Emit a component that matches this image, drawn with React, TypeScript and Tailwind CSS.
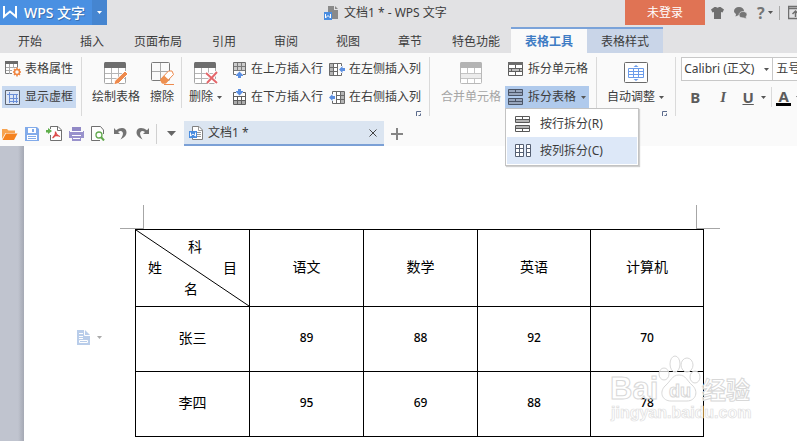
import { useState, type ReactNode } from "react";

type Student = {
  name: string;
  scores: number[];
};

const tabs = ["开始", "插入", "页面布局", "引用", "审阅", "视图", "章节", "特色功能"];

const subjects = ["语文", "数学", "英语", "计算机"];

const students: Student[] = [
  { name: "张三", scores: [89, 88, 92, 70] },
  { name: "李四", scores: [95, 69, 88, 78] },
];

/* ---------- Icons ---------- */

function Icon({ w, h, children }: { w: number; h: number; children: ReactNode }) {
  return (
    <svg
      width={w}
      height={h}
      viewBox={`0 0 ${w} ${h}`}
      fill="none"
      className="block shrink-0"
      aria-hidden="true"
    >
      {children}
    </svg>
  );
}

function Caret() {
  return (
    <Icon w={5} h={3}>
      <path d="M0 0h5L2.500 3z" fill="#555" />
    </Icon>
  );
}

function LauncherIcon() {
  return (
    <Icon w={5} h={5}>
      <path d="M.5 5V.5H5M2.500 4.500H4.500V2.500" stroke="#5b6b8c" />
    </Icon>
  );
}

function BigTable({ muted = false }: { muted?: boolean }) {
  return (
    <>
      <rect x="1.500" y=".5" width="21" height="21" rx="1" fill="#fff" stroke={muted ? "#b9b9b9" : "#a6a6a6"} />
      <path d="M1 6V1.500L2 0h20l1 1.500V6z" fill={muted ? "#b4b4b4" : "#6e6e6e"} />
    </>
  );
}

function DrawTableIcon() {
  return (
    <Icon w={26} h={22}>
      <BigTable />
      <path d="M8.500 6v15M15.500 6v15M2 11.500h20M2 16.500h20" stroke="#b5b5b5" />
      <path d="M22 9l3 3-9.500 9.500-5 1.500 1.500-4.500z" fill="#ee8a4d" stroke="#fff" />
    </Icon>
  );
}

function EraseIcon() {
  return (
    <Icon w={24} h={23}>
      <rect x="1.500" y=".5" width="18" height="18" rx="1" stroke="#7a7a7a" />
      <path d="M10.500 1v17M2 9.500h17" stroke="#aaa" />
      <path d="M10.500 17.500l8-8.500h3.500l1.500 3.500-8 8.500h-3z" fill="#fff" stroke="#ee8a4d" />
      <path d="M10 18l4-4.500 5 4.500-3 3.500h-4z" fill="#ee9050" />
      <path d="M14 22.500h10" stroke="#ee8a4d" />
    </Icon>
  );
}

function DeleteTableIcon() {
  return (
    <Icon w={26} h={22}>
      <BigTable />
      <path d="M8.500 6v15M15.500 6v15M2 11.500h20M2 16.500h20" stroke="#b5b5b5" />
      <path d="M13 11l11 10M24 10L14 21" stroke="#fff" strokeWidth="4" />
      <path d="M13 11l11 10M24 10L14 21" stroke="#e4676b" strokeWidth="2" />
    </Icon>
  );
}

function MergeIcon() {
  return (
    <Icon w={24} h={22}>
      <BigTable muted />
      <path d="M2 11h20v5H2z" fill="#ececec" />
      <path d="M8.500 6v5M15.500 6v5M8.500 16v5M15.500 16v5M2 11.500h20M2 16.500h20" stroke="#c4c4c4" />
    </Icon>
  );
}

function AutoFitIcon() {
  return (
    <Icon w={24} h={22}>
      <rect x=".5" y=".5" width="23" height="20" rx="1" fill="#fff" stroke="#6a6a6a" />
      <path
        d="M4.500 6.500h15v9h-15zM4.500 9.500h15M4.500 12.500h15M9.500 6.500v9M14.500 6.500v9"
        stroke="#6a9bea"
      />
      <path d="M12 3l2.500 2h-5zM12 19l2.500-2h-5z" fill="#6a9bea" />
    </Icon>
  );
}

function TablePropsIcon() {
  return (
    <Icon w={16} h={16}>
      <path d="M.5.500h12v12H.5z" fill="#fff" stroke="#777" />
      <path d="M0 0h13v3H0z" fill="#6b6b6b" />
      <path d="M4.500 3v10M8.500 3v10M1 6.500h12M1 9.500h12" stroke="#aaa" />
      <path d="M7 7h9v9H7z" fill="#fafafa" />
      <circle cx="12" cy="11" r="2.500" stroke="#f08540" strokeWidth="1.500" />
      <path
        d="M12 6.500v2M12 13.500v2M8 11h1.500M14.500 11H16M9 8l1 1M15 8l-1 1M9 14l1-1M15 14l-1-1"
        stroke="#f08540"
        strokeWidth="1.500"
      />
    </Icon>
  );
}

function GridFrameIcon() {
  return (
    <Icon w={16} h={15}>
      <path d="M.5.500h14v14H.5z" fill="#dde7f6" stroke="#5f6673" />
      <path d="M4.500 2v11M8.500 4v9M11.500 4v9M2 4.500h11M4 8.500h9M4 11.500h9" stroke="#6b8fd8" />
    </Icon>
  );
}

function InsertRowIcon({ below = false }: { below?: boolean }) {
  return (
    <Icon w={14} h={17}>
      {below ? (
        <>
          <path d="M.5 3.500h12v12H.5z" fill="#fff" stroke="#5e5e5e" />
          <path d="M1 12h11v3H1z" fill="#ababab" />
          <path d="M1 7.500h11M1 11.500h11M4.500 7v8M8.500 7v8" stroke="#5e5e5e" />
          <path d="M3 2h7v5H3z" fill="#fafafa" />
          <path d="M5 0h3v2h2v1L6.500 6.500 3 3V2h2z" fill="#5b8ee0" />
        </>
      ) : (
        <>
          <path d="M.5 1.500h12v12H.5z" fill="#fff" stroke="#6e6e6e" />
          <path d="M1 2h11v7H1z" fill="#cdcdcd" />
          <path d="M1 5.500h11M1 9.500h11M4.500 2v11M8.500 2v11" stroke="#7a7a7a" />
          <path d="M3 10h7v5H3z" fill="#fafafa" />
          <path d="M5 17h3v-2h2v-1l-3.500-3.500L3 14v1h2z" fill="#5b8ee0" />
        </>
      )}
    </Icon>
  );
}

function InsertColIcon({ right = false }: { right?: boolean }) {
  return (
    <Icon w={16} h={13}>
      {right ? (
        <>
          <path d="M3.500 .5h12v12h-12z" fill="#fff" stroke="#6a6a6a" />
          <path d="M12 1h3v11h-3z" fill="#b5b5b5" />
          <path d="M7.500 .5v12M11.500 .5v12M4 4.500h11M4 8.500h11" stroke="#6a6a6a" />
          <path d="M2 3h5v7H2z" fill="#fafafa" />
          <path d="M0 6.500L3.500 3v2H6v3H3.500v2z" fill="#5b8ee0" />
        </>
      ) : (
        <>
          <path d="M.5.500h12v12H.5z" fill="#fff" stroke="#6a6a6a" />
          <path d="M1 1h3v11H1z" fill="#b5b5b5" />
          <path d="M4.500 .5v12M8.500 .5v12M1 4.500h11M1 8.500h11" stroke="#6a6a6a" />
          <path d="M9 3h5v7H9z" fill="#fafafa" />
          <path d="M10 6.500L13.500 3v2H16v3h-2.500v2z" fill="#5b8ee0" />
        </>
      )}
    </Icon>
  );
}

function SplitCellIcon() {
  return (
    <Icon w={15} h={14}>
      <path d="M.5.500h14v13H.5z" fill="#fff" stroke="#5e5e5e" />
      <path d="M0 0h15v3H0z" fill="#6b6b6b" />
      <path d="M1 6h13v4H1z" fill="#bdbdbd" />
      <path d="M1 6.500h13M1 9.500h13M7.500 3v3M7.500 10v3M3.500 6v4M11.500 6v4" stroke="#5e5e5e" />
    </Icon>
  );
}

function SplitRowsIcon() {
  return (
    <Icon w={15} h={16}>
      <path d="M1 1h13v5H1zM1 10h13v5H1z" fill="#fff" />
      <path d="M1 3h13v3H1zM1 10h13v2H1z" fill="#b5b5b5" />
      <path
        d="M.5.500h14v6H.5zM.5 3.500h14M7.500 .5v3M.5 9.500h14v6H.5zM.5 12.500h14M7.500 12.500v3"
        stroke="#585858"
      />
    </Icon>
  );
}

function SplitColsIcon() {
  return (
    <Icon w={16} h={13}>
      <path d="M.5.500h8v12h-8zM4.500 .5v12M.5 4.500h8M.5 8.500h8" fill="#fff" stroke="#566073" />
      <path d="M11.500 .5h4v12h-4zM11.500 4.500h4M11.500 8.500h4" fill="#fff" stroke="#566073" />
    </Icon>
  );
}

function WpsDocIcon() {
  return (
    <Icon w={15} h={14}>
      <path d="M4 0h6v4h4v9H4z" fill="#8a8a8a" />
      <path d="M11 0l3 3h-3z" fill="#8a8a8a" />
      <path d="M0 6h8v8H0z" fill="#4a8de0" />
      <path d="M1.500 8v4L4 9.500 6.500 12V8" stroke="#fff" />
    </Icon>
  );
}

/* ---------- Ribbon pieces ---------- */

function Divider() {
  return <div className="h-[59px] w-px shrink-0 bg-[#dadada]" />;
}

function SmallButton({
  icon,
  label,
  className = "",
}: {
  icon: ReactNode;
  label: string;
  className?: string;
}) {
  return (
    <button type="button" className={`flex h-[22px] shrink-0 items-center gap-1 ${className}`}>
      {icon}
      <span>{label}</span>
    </button>
  );
}

function LargeButton({
  icon,
  label,
  caret = false,
  disabled = false,
}: {
  icon: ReactNode;
  label: string;
  caret?: boolean;
  disabled?: boolean;
}) {
  return (
    <button
      type="button"
      disabled={disabled}
      className="flex shrink-0 flex-col items-center pt-1 disabled:text-[#a5a5a5]"
    >
      <span className="flex h-6 items-start">{icon}</span>
      <span className="flex h-[22px] items-center gap-1">
        {label}
        {caret && <Caret />}
      </span>
    </button>
  );
}

function TitleBar() {
  return (
    <header className="flex h-[27px] items-start">
      <button
        type="button"
        className="flex h-[25px] shrink-0 items-center gap-[7px] bg-[#4a90e2] pl-[3px] text-[14px] font-medium text-white"
      >
        <Icon w={14} h={13}>
          <path d="M1 0v10.500l6-5 6 5V0" stroke="#fff" strokeWidth="2" />
        </Icon>
        <span className="w-[68px] text-left [text-shadow:1px_1px_0_#3a6fae]">WPS 文字</span>
      </button>
      <button
        type="button"
        aria-label="主菜单"
        className="flex h-[25px] w-[15px] shrink-0 items-center justify-center bg-[#4585d0]"
      >
        <Icon w={5} h={3}>
          <path d="M0 0h5L2.500 3z" fill="#fff" />
        </Icon>
      </button>

      <div className="flex h-[25px] min-w-0 flex-1 items-center gap-[5px] pl-[217px]">
        <WpsDocIcon />
        <h1>文档1 * - WPS 文字</h1>
      </div>

      <button type="button" className="h-[25px] w-20 shrink-0 bg-[#e07354] text-white">
        未登录
      </button>
      <div className="flex h-[25px] w-[92px] shrink-0 items-center overflow-hidden pl-[6px]">
        <button type="button" aria-label="皮肤">
          <Icon w={13} h={12}>
            <path d="M3.500 0h1.500q1.500 1.500 3 0h1.500L13 2.500 11.500 5.500l-1.500-.5v7H3V5l-1.500.5L0 2.500z" fill="#6f6f6f" />
          </Icon>
        </button>
        <button type="button" aria-label="反馈" className="ml-[10px]">
          <Icon w={13} h={12}>
            <path d="M5 0c3 0 5 1.800 5 4S8 8 5 8L1.500 9.500 2 7C.5 6 0 5 0 4c0-2.200 2-4 5-4z" fill="#757575" />
            <path
              d="M9 4.500c2.500 0 4 1.300 4 3 0 1-.5 1.800-1 2.300l.5 2.200-2.500-1c-3 0-5-1-5-3s1.500-3.500 4-3.500z"
              fill="#757575"
              stroke="#e2e2e4"
              strokeWidth=".7"
            />
          </Icon>
        </button>
        <button
          type="button"
          aria-label="帮助"
          className="ml-[10px] flex items-center gap-[3px] text-[16px] font-bold text-[#757575]"
        >
          ?
          <Caret />
        </button>
        <div className="ml-[6px] h-[14px] w-px shrink-0 bg-[#a9a9a9]" />
        <button type="button" aria-label="隐藏功能区" className="ml-2">
          <Icon w={15} h={15}>
            <path d="M.5 1.500h14v12H.5zM.5 3.500h14M7.500 12V6M4.500 9l3-3 3 3" stroke="#6f6f6f" strokeWidth="1.500" />
          </Icon>
        </button>
      </div>
    </header>
  );
}

function RibbonTabs() {
  return (
    <nav className="-ml-px flex h-[26px]">
      {tabs.map((tab) => (
        <button
          key={tab}
          type="button"
          className={`h-[26px] shrink-0 pt-1 ${tab.length > 2 ? "w-[70px]" : "w-[62px]"}`}
        >
          {tab}
        </button>
      ))}
      <button
        type="button"
        className="h-[26px] w-[76px] shrink-0 border-t-2 border-[#7ba3d9] bg-[#fafafa] pt-[2px] font-bold text-[#3f7cc4]"
      >
        表格工具
      </button>
      <button type="button" className="h-[26px] w-[76px] shrink-0 border-t-2 border-[#7ba3d9] bg-[#c9d5e8] pt-[2px]">
        表格样式
      </button>
    </nav>
  );
}

function SplitTableButton() {
  const [open, setOpen] = useState(true);

  return (
    <div className="relative">
      <button
        type="button"
        aria-expanded={open}
        onClick={() => setOpen(!open)}
        className="flex h-[22px] w-[84px] items-center bg-[#b0caec] pl-[3px]"
      >
        <Icon w={15} h={16}>
          <path
            d="M.5.500h14v6H.5zM.5 3.500h14M7.500 .5v3M.5 9.500h14v6H.5zM.5 12.500h14M7.500 9.500v3"
            fill="#98a6bd"
            stroke="#4b5567"
          />
        </Icon>
        <span className="mr-[5px] ml-[5px]">拆分表格</span>
        <Caret />
      </button>
      {open && (
        <div
          role="menu"
          className="absolute top-[22px] left-0 z-10 w-[134px] border border-[#c3c3c3] bg-white p-px shadow-[1px_1px_1px_#d0d0d0]"
        >
          <button type="button" role="menuitem" className="flex h-[27px] w-full items-center gap-[10px] pl-2">
            <SplitRowsIcon />
            按行拆分(R)
          </button>
          <button
            type="button"
            role="menuitem"
            className="flex h-[27px] w-full items-center gap-[9px] bg-[#dde8f8] pl-2"
          >
            <SplitColsIcon />
            按列拆分(C)
          </button>
        </div>
      )}
    </div>
  );
}

function FontGroup() {
  return (
    <div className="ml-[5px] shrink-0">
      <div className="flex">
        <div className="relative">
          <select
            aria-label="字体"
            className="h-6 w-[92px] appearance-none border border-[#c8c8c8] bg-white pl-[2px]"
          >
            <option>Calibri (正文)</option>
          </select>
          <div className="pointer-events-none absolute top-[11px] right-1">
            <Caret />
          </div>
        </div>
        <select
          aria-label="字号"
          className="-ml-px h-6 w-16 appearance-none border border-[#c8c8c8] bg-white pl-[3px]"
        >
          <option>五号</option>
        </select>
      </div>
      <div className="mt-[5px] flex h-[22px] items-center text-[15px] font-bold text-[#5c5c5c]">
        <button type="button" aria-label="加粗" className="w-7">
          B
        </button>
        <button type="button" aria-label="倾斜" className="w-7 font-['Liberation_Serif',serif] italic">
          I
        </button>
        <button type="button" aria-label="下划线" className="w-[22px] underline">
          U
        </button>
        <button type="button" aria-label="下划线样式" className="pl-[2px]">
          <Caret />
        </button>
        <div className="ml-[5px] h-5 w-px bg-[#dadada]" />
        <button type="button" aria-label="字体颜色" className="ml-1 h-[18px] w-[15px] border-b-3 border-black leading-4">
          A
        </button>
        <span className="ml-[5px]">
          <Caret />
        </span>
      </div>
    </div>
  );
}

function Ribbon() {
  return (
    <div className="flex h-[68px] items-start bg-[#fafafa] pt-1">
      <div className="ml-[2px] flex shrink-0 flex-col gap-[6px] pt-px pr-[5px]">
        <SmallButton icon={<TablePropsIcon />} label="表格属性" className="px-[3px]" />
        <SmallButton icon={<GridFrameIcon />} label="显示虚框" className="bg-[#c8d9f0] px-[3px]" />
      </div>
      <Divider />

      <div className="flex shrink-0 gap-[10px] pt-px pr-[7px] pl-[10px]">
        <LargeButton icon={<DrawTableIcon />} label="绘制表格" />
        <LargeButton icon={<EraseIcon />} label="擦除" />
      </div>
      <div className="h-[51px] w-px shrink-0 bg-[#dadada]" />

      <div className="relative flex shrink-0 gap-[11px] pt-px pr-2 pl-[7px]">
        <LargeButton icon={<DeleteTableIcon />} label="删除" caret />
        <div className="grid grid-cols-[auto_auto] gap-[6px]">
          <SmallButton icon={<InsertRowIcon />} label="在上方插入行" />
          <SmallButton icon={<InsertColIcon />} label="在左侧插入列" />
          <SmallButton icon={<InsertRowIcon below />} label="在下方插入行" />
          <SmallButton icon={<InsertColIcon right />} label="在右侧插入列" />
        </div>
        <button type="button" aria-label="表格选项" className="absolute top-[54px] right-2">
          <LauncherIcon />
        </button>
      </div>
      <Divider />

      <div className="flex shrink-0 gap-1 pt-px pr-[7px] pl-[11px]">
        <LargeButton icon={<MergeIcon />} label="合并单元格" disabled />
        <div className="flex flex-col gap-[6px]">
          <button type="button" className="flex h-[22px] items-center gap-[5px] pl-[3px]">
            <SplitCellIcon />
            <span>拆分单元格</span>
          </button>
          <SplitTableButton />
        </div>
      </div>
      <Divider />

      <div className="relative shrink-0 pt-px pr-[11px] pl-[10px]">
        <LargeButton icon={<AutoFitIcon />} label="自动调整" caret />
        <button type="button" aria-label="单元格大小" className="absolute top-[54px] right-2">
          <LauncherIcon />
        </button>
      </div>
      <Divider />

      <FontGroup />
    </div>
  );
}

function QuickAccessBar() {
  return (
    <div className="flex h-[25px] items-center bg-[#fafafa]">
      <div className="flex shrink-0 items-center gap-[7px] pl-[2px]">
        <button type="button" aria-label="打开">
          <Icon w={16} h={14}>
            <path d="M0 2h5l1.500 1.500H13V6H3.500L0 12z" fill="#f7a350" />
            <path d="M4 6.500h11.500L12 13H.5z" fill="#f5821f" />
          </Icon>
        </button>
        <button type="button" aria-label="保存">
          <Icon w={14} h={14}>
            <path d="M0 0h12l2 2v12H0z" fill="#82abea" />
            <path d="M3 1h8v5H3zM2 8h10v5H2z" fill="#fff" />
            <path d="M7 2h2v3H7zM3 9h8v1H3zM3 11h8v1H3z" fill="#82abea" />
          </Icon>
        </button>
        <button type="button" aria-label="输出为PDF">
          <Icon w={16} h={15}>
            <path d="M4.500 3V.5H12L15.500 4v10.500h-11V9" fill="#fff" />
            <path d="M4.500 3V.5H12L15.500 4v10.500h-11V9M11.500 .5V4.500h4" stroke="#707070" />
            <path d="M0 4h2V2l4 3-4 3V6.500H0z" fill="#5fae4b" />
            <path d="M9.500 5.500q.5 4-3 6.500M9.500 5.500q.5 3.500 4.500 5M7 10.500q3-1.500 6-.5" stroke="#dd4a48" strokeWidth="1.300" />
          </Icon>
        </button>
        <button type="button" aria-label="打印">
          <Icon w={15} h={14}>
            <path d="M3 0h9v4H3z" fill="#9189c6" />
            <path d="M0 4h15v7H0zM3 10h9v4H3z" fill="#9992cc" />
            <path d="M1 4.500h13M3 8.500h9M4 11.500h7" stroke="#fff" />
          </Icon>
        </button>
        <button type="button" aria-label="打印预览">
          <Icon w={14} h={15}>
            <path d="M12.500 8V4L9.500 .5h-9v14H9" fill="#fff" stroke="#707070" />
            <circle cx="8" cy="9" r="3" fill="#fff" stroke="#62a94e" strokeWidth="1.300" />
            <path d="M10 11l3 3.500" stroke="#62a94e" strokeWidth="2" />
          </Icon>
        </button>
        <button type="button" aria-label="撤销" className="ml-[2px]">
          <Icon w={13} h={13}>
            <path d="M0 1v6h6L4 5q3-2 4.500 0t-2 7.500Q13 9 12.500 5T8 1Q5 1 2 3.200z" fill="#737373" />
          </Icon>
        </button>
        <button type="button" aria-label="恢复" className="ml-[2px]">
          <Icon w={13} h={13}>
            <path d="M13 1v6H7l2-2Q6 3 4.500 5t2 7.500Q0 9 .5 5T5 1q3 0 6 2.200z" fill="#737373" />
          </Icon>
        </button>
      </div>
      <div className="ml-[7px] h-5 w-px shrink-0 bg-[#d0d0d0]" />
      <button type="button" aria-label="自定义快速访问工具栏" className="ml-[10px] shrink-0">
        <Icon w={9} h={5}>
          <path d="M0 0h9L4.500 5z" fill="#666" />
        </Icon>
      </button>

      <div className="ml-2 flex h-[25px] w-[200px] shrink-0 items-center border-b-2 border-[#7ba0d6] bg-[#dbe5f1] pl-[5px]">
        <Icon w={14} h={14}>
          <path d="M3.500 .5H10L13.500 4v9.500h-10z" fill="#fff" stroke="#808080" />
          <path d="M9.500 .5V4.500h4M8 6.500h4M8 8.500h4M8 10.500h4" stroke="#9a9a9a" />
          <path d="M0 5h8v7H0z" fill="#4a8de0" />
          <path d="M1.500 6.500V10L4 8l2.500 2V6.500" stroke="#fff" />
        </Icon>
        <span className="ml-[5px] flex-1">文档1 *</span>
        <button type="button" aria-label="关闭文档" className="mr-[7px]">
          <Icon w={8} h={8}>
            <path d="M.5.500l7 7M7.500 .5l-7 7" stroke="#444" />
          </Icon>
        </button>
      </div>
      <button type="button" aria-label="新建文档" className="ml-[7px] shrink-0">
        <Icon w={12} h={12}>
          <path d="M6 0v12M0 6h12" stroke="#858585" strokeWidth="2" />
        </Icon>
      </button>
    </div>
  );
}

/* ---------- Document ---------- */

function ScoreTable() {
  return (
    <table className="ml-[111px] w-[569px] table-fixed border-collapse text-center text-[14px] text-black">
      <colgroup>
        <col className="w-[114px]" />
        <col className="w-[114px]" />
        <col className="w-[114px]" />
        <col className="w-[113px]" />
        <col className="w-[113px]" />
      </colgroup>
      <thead>
        <tr className="h-[77px]">
          <th className="relative border border-black p-0 font-normal">
            <svg
              className="absolute inset-0 h-full w-full"
              viewBox="0 0 113 76"
              preserveAspectRatio="none"
              aria-hidden="true"
            >
              <path d="M0 0L113 76" stroke="#000" />
            </svg>
            <div className="pb-[2px] text-left leading-[21px]">
              <div className="pl-[52px]">科</div>
              <div className="flex justify-between px-3">
                <span>姓</span>
                <span>目</span>
              </div>
              <div className="pl-12">名</div>
            </div>
          </th>
          {subjects.map((s) => (
            <th key={s} className="border border-black p-0 pb-[2px] font-normal">
              {s}
            </th>
          ))}
        </tr>
      </thead>
      <tbody>
        {students.map((st) => (
          <tr key={st.name} className="h-[65px]">
            <td className="border border-black p-0 pb-[2px]">{st.name}</td>
            {st.scores.map((score, i) => (
              <td key={i} className="border border-black p-0 pb-[2px] text-[12px] font-medium">
                {score}
              </td>
            ))}
          </tr>
        ))}
      </tbody>
    </table>
  );
}

function Watermark() {
  return (
    <svg
      width="146"
      height="72"
      viewBox="0 0 146 72"
      className="pointer-events-none absolute top-[208px] left-[609px]"
      aria-hidden="true"
    >
      <g fill="#fff" fillOpacity="0.7" stroke="#d8d8d8" className="font-['Liberation_Sans']">
        <text x="1" y="45" fontSize="31" fontWeight="bold">
          Bai
        </text>
        <ellipse cx="55" cy="20" rx="5" ry="6" />
        <ellipse cx="66" cy="10" rx="5" ry="8" />
        <ellipse cx="78" cy="11" rx="6" ry="7" />
        <ellipse cx="86" cy="23" rx="5" ry="6" />
        <path d="M70 21c7 0 8 6 13 10 7 6 4 16-5 16H62c-9 0-12-9-6-15 6-5 7-11 14-11z" />
        <text x="60" y="43" fontSize="18" fontWeight="bold">
          du
        </text>
      </g>
      <text
        x="93"
        y="45"
        fontSize="24"
        fontWeight="bold"
        fill="#fff"
        fillOpacity="0.7"
        stroke="#d8d8d8"
        className="font-['Noto_Sans_CJK_SC']"
      >
        经验
      </text>
      <text
        x="2"
        y="64"
        fontSize="16"
        fontWeight="bold"
        fill="#fff"
        fillOpacity="0.5"
        stroke="#dedede"
        strokeWidth=".7"
        className="font-['Liberation_Sans']"
      >
        jingyan.baidu.com
      </text>
    </svg>
  );
}

function DocumentArea() {
  return (
    <main className="relative flex flex-1">
      <div className="w-6 shrink-0 bg-linear-to-r from-[#c0c4cf] from-75% to-[#a5a9b4]" />
      <div className="min-w-0 flex-1 bg-white pt-[59px]">
        {/* page margin corners */}
        <div className="ml-24 flex w-[600px] justify-between">
          <div className="size-6 border-r border-b border-[#a6a6a6]" />
          <div className="size-6 border-b border-l border-[#a6a6a6]" />
        </div>
        <ScoreTable />
      </div>
      <button
        type="button"
        aria-label="段落布局"
        className="absolute top-[184px] left-[77px] flex items-center gap-[7px]"
      >
        <Icon w={13} h={15}>
          <path d="M0 0h8l5 5v10H0z" fill="#b9cdea" />
          <path d="M7.500 0v5.500H13M2 3.500h4M2 6.500h4M2 8.500h4M2.500 10.500h8v2h-8z" stroke="#fff" />
        </Icon>
        <Icon w={5} h={3}>
          <path d="M0 0h5L2.500 3z" fill="#aaa" />
        </Icon>
      </button>
      <Watermark />
    </main>
  );
}

export default function App() {
  return (
    <div className="flex min-h-screen flex-col overflow-hidden bg-[#e2e2e4] font-['Noto_Sans','Noto_Sans_CJK_SC',sans-serif] text-[12px] leading-4 whitespace-nowrap text-[#3c3c3c]">
      <TitleBar />
      <RibbonTabs />
      <Ribbon />
      <QuickAccessBar />
      <DocumentArea />
    </div>
  );
}
